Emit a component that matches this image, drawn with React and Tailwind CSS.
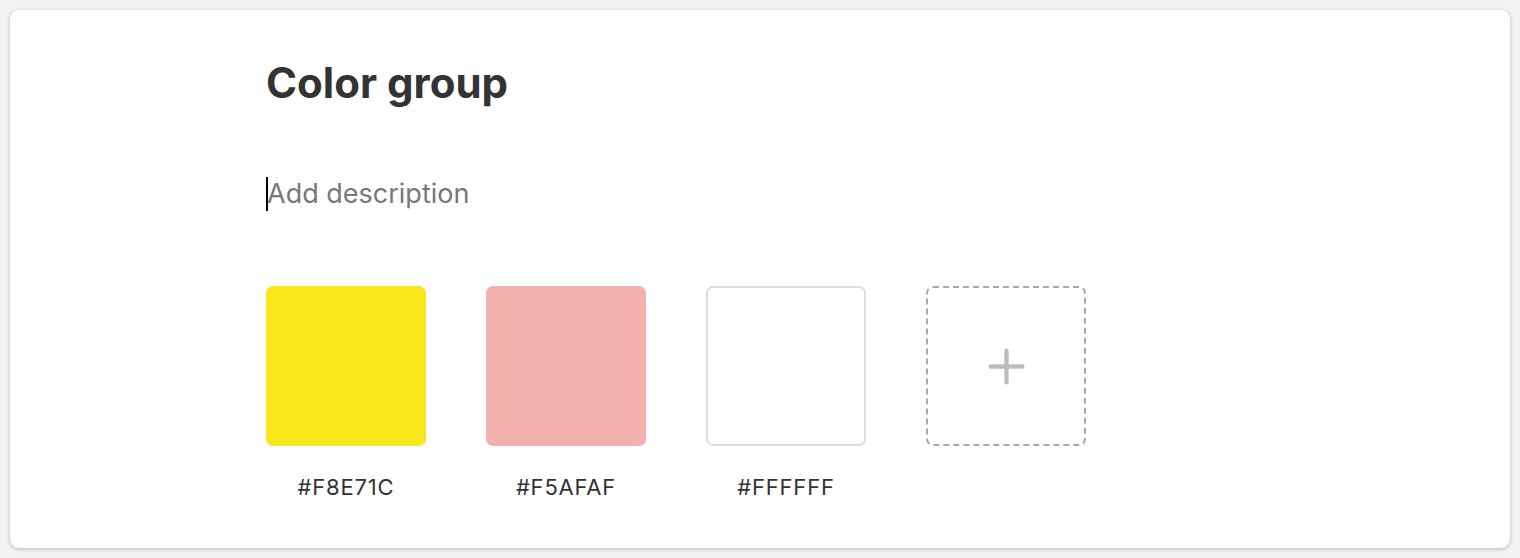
export default function App() {
  const swatches = [
    { hex: "#F8E71C", cls: "bg-[#f8e71c]" },
    { hex: "#F5AFAF", cls: "bg-[#f4b0af]" },
    { hex: "#FFFFFF", cls: "bg-white border-2 border-[#dedede]" },
  ];
  return (
    <div className="w-[1520px] h-[558px] bg-[#f3f3f3] p-[10px]">
      <div className="w-full h-full bg-white rounded-[9px] shadow-[0_1px_4px_rgba(0,0,0,0.25)] pl-[256px] pt-[50px]">
        <h1 className="text-[42px] leading-[46px] font-bold text-[#333333] tracking-[0px] font-['Inter',sans-serif]">
          Color group
        </h1>
        <div className="mt-[71px] flex items-center h-[34px] font-['Inter',sans-serif] text-[27px] text-[#787878]">
          <span className="w-[2px] h-[34px] bg-black -mr-[1px]" />
          <span>Add description</span>
        </div>
        <div className="mt-[75px] flex gap-[60px]">
          {swatches.map((s) => (
            <div key={s.hex} className="w-[160px] flex flex-col items-center">
              <div className={`w-[160px] h-[160px] rounded-[7px] ${s.cls}`} />
              <div className="mt-[28px] text-[22px] leading-[26px] tracking-[0.8px] text-[#333333] font-['Inter',sans-serif]">
                {s.hex}
              </div>
            </div>
          ))}
          <div className="w-[160px] h-[160px] rounded-[7px] border-2 border-dashed border-[#a9a9a9] flex items-center justify-center">
            <svg width="37" height="37" viewBox="0 0 36 36" fill="none">
              <path d="M18 2.5v31M2.5 18h31" stroke="#b9bcc1" strokeWidth="4.2" strokeLinecap="round" />
            </svg>
          </div>
        </div>
      </div>
    </div>
  );
}
